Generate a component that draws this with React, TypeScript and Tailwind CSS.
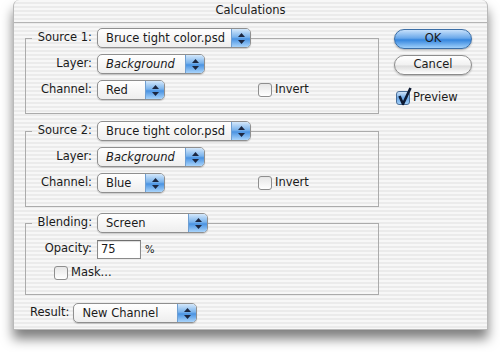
import React from "react";

// Aqua pinstripe, fixed so every striped layer lines up
const stripes =
  "bg-[repeating-linear-gradient(to_bottom,#f7f7f7_0px,#f7f7f7_2px,#ebebeb_2px,#ebebeb_4px)] bg-fixed";

const Arrows = () => (
  <svg width="7" height="11" viewBox="0 0 7 11">
    <polygon points="3.5,0 7,4 0,4" fill="#1c2740" />
    <polygon points="0,7 7,7 3.5,11" fill="#1c2740" />
  </svg>
);

interface PopUpProps {
  label: string;
  width: string;
  italic?: boolean;
}

const PopUp: React.FC<PopUpProps> = ({ label, width, italic }) => (
  <div
    className={`flex h-[20px] ${width} overflow-hidden rounded-[5px] border border-[#8f8f8f] bg-gradient-to-b from-white to-[#eeeeee] shadow-[0_1px_1px_rgba(0,0,0,0.18)]`}
  >
    <div className={`flex-1 pl-[8px] leading-[18px] ${italic ? "italic" : ""}`}>
      {label}
    </div>
    <div className="flex w-[19px] items-center justify-center border-l border-[#6f9fd2] bg-[linear-gradient(to_bottom,#d4e8fb,#7ab3ec_45%,#4a93e2_55%,#a9d4fb)]">
      <Arrows />
    </div>
  </div>
);

const CheckBox = ({ checked }: { checked?: boolean }) => (
  <div
    className={`relative h-[14px] w-[14px] rounded-[3px] border ${
      checked
        ? "border-[#4b6f98] bg-[linear-gradient(to_bottom,#cfe4fa,#6ca8e6_50%,#9fcdf8)]"
        : "border-[#8e8e8e] bg-gradient-to-b from-[#e6e6e6] to-white"
    }`}
  >
    {checked && (
      <svg
        className="absolute -top-[6px] left-[0px]"
        width="16"
        height="20"
        viewBox="0 0 16 20"
      >
        <path
          d="M2.5 10 L6 18 L13.5 2"
          fill="none"
          stroke="#0d1a33"
          strokeWidth="2.6"
          strokeLinejoin="round"
        />
      </svg>
    )}
  </div>
);

const Label = ({ text, first }: { text: string; first?: boolean }) => (
  <div className="flex w-[71px] justify-end">
    <span className={first ? `${stripes} pl-[6px] pr-[5px]` : "pr-[5px]"}>
      {text}
    </span>
  </div>
);

const Invert = () => (
  <div className="ml-[93px] flex items-center gap-[3px]">
    <CheckBox />
    <span>Invert</span>
  </div>
);

const SourceGroup = ({ n, channel, mt }: { n: number; channel: string; mt: string }) => (
  <div className={`${mt} border border-[#ababab] pb-[13px]`}>
    <div className="-mt-[11px] flex h-[20px] items-center">
      <Label text={`Source ${n}:`} first />
      <PopUp label="Bruce tight color.psd" width="w-[154px]" />
    </div>
    <div className="mt-[6px] flex h-[20px] items-center">
      <Label text="Layer:" />
      <PopUp label="Background" width="w-[108px]" italic />
    </div>
    <div className="mt-[6px] flex h-[20px] items-center">
      <Label text="Channel:" />
      <PopUp label={channel} width="w-[68px]" />
      <Invert />
    </div>
  </div>
);

export default function App() {
  return (
    <div
      className="h-[352px] w-[500px] bg-white pt-0 text-[11.5px] text-[#1a1a1a]"
      style={{ fontFamily: '"DejaVu Sans", "Liberation Sans", sans-serif' }}
    >
      <div
        className={`ml-[13px] flex h-[330px] w-[475px] flex-col rounded-t-[6px] border-x border-b border-[#b9b9b9] shadow-[0_9px_12px_rgba(0,0,0,0.5)] ${stripes}`}
      >
        {/* Title bar */}
        <div className="flex h-[23px] items-center justify-center border-b border-[#b4b4b4] text-[11.5px]">
          Calculations
        </div>

        <div className="flex pl-[11px]">
          {/* Left column */}
          <div className="w-[354px]">
            <SourceGroup n={1} channel="Red" mt="mt-[15px]" />
            <SourceGroup n={2} channel="Blue" mt="mt-[17px]" />

            <div className="mt-[16px] border border-[#ababab] pb-[11px]">
              <div className="-mt-[11px] flex h-[20px] items-center">
                <Label text="Blending:" first />
                <PopUp label="Screen" width="w-[111px]" />
              </div>
              <div className="mt-[6px] flex h-[20px] items-center">
                <Label text="Opacity:" />
                <div className="h-[19px] w-[44px] border border-[#8a8a8a] border-t-[#6e6e6e] bg-white pl-[3px] leading-[17px] shadow-[inset_0_1px_1px_rgba(0,0,0,0.15)]">
                  75
                </div>
                <span className="ml-[4px] text-[10px]">%</span>
              </div>
              <div className="mt-[4px] flex h-[20px] items-center gap-[3px] pl-[28px]">
                <CheckBox />
                <span>Mask...</span>
              </div>
            </div>

            <div className="mt-[8px] flex h-[20px] items-center gap-[4px] pl-[5px]">
              <span>Result:</span>
              <PopUp label="New Channel" width="w-[124px]" />
            </div>
          </div>

          {/* Right column */}
          <div className="ml-[15px] flex flex-col pt-[6px]">
            <div className="flex h-[20px] w-[78px] items-center justify-center rounded-full border border-[#3b6ea6] bg-[linear-gradient(to_bottom,#c6e0fb,#6aa8ea_45%,#3586de_55%,#9fd0fb)] shadow-[0_1px_2px_rgba(0,0,0,0.3)]">
              OK
            </div>
            <div className="mt-[6px] flex h-[20px] w-[78px] items-center justify-center rounded-full border border-[#8c8c8c] bg-[linear-gradient(to_bottom,#ffffff,#f1f1f1_50%,#dcdcdc_55%,#ffffff)] shadow-[0_1px_2px_rgba(0,0,0,0.25)]">
              Cancel
            </div>
            <div className="mt-[14px] flex items-center gap-[3px] pl-[2px]">
              <CheckBox checked />
              <span>Preview</span>
            </div>
          </div>
        </div>
      </div>
    </div>
  );
}
